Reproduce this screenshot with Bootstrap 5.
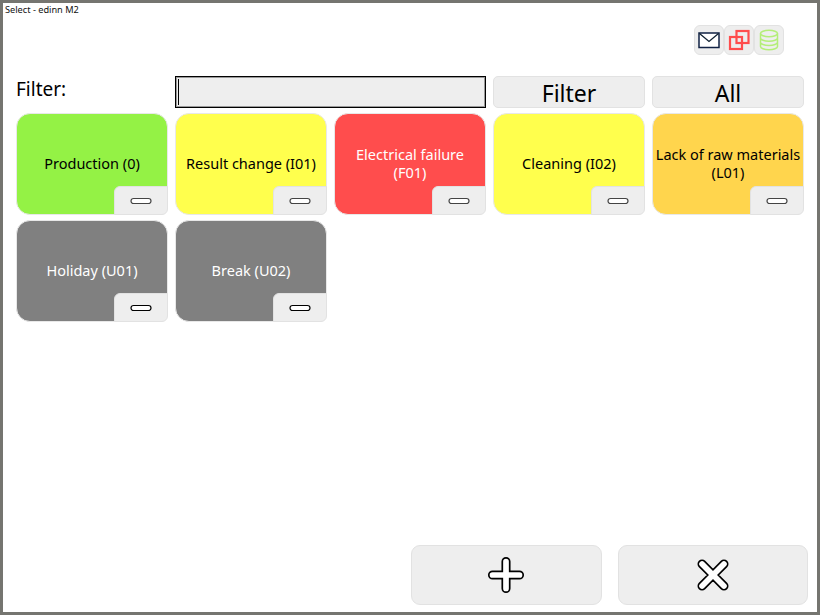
<!DOCTYPE html>
<html lang="en"><head><meta charset="utf-8"><title>Select - edinn M2</title>
<link href="https://cdn.jsdelivr.net/npm/bootstrap@5.3.0/dist/css/bootstrap.min.css" rel="stylesheet">
<style>
html,body{margin:0;height:615px;overflow:hidden;background:#fff}
body{font-family:"Noto Sans","DejaVu Sans",sans-serif;color:#000}
.win{width:820px;height:615px;border:3px solid #757570;background:#fff;padding:0 6px 7px 13px}
.wintitle{font-size:9.2px;line-height:12px;height:22px;margin-left:-11px;padding-top:1px;color:#111}
.topicons{height:30px;padding-right:27px}
.ibtn,.fbtn,.minbtn,.bigbtn{background:#eee;border:1px solid #e2e2e2;padding:0;display:flex;align-items:center;justify-content:center;color:#000}
.ibtn{width:30px;height:30px;border-radius:6px}
.filterrow{height:32px;margin-top:21px;width:788px;gap:7px}
.flabel{width:152px;font-size:19px;line-height:24px;padding-top:1px}
.finput{width:311px;height:32px;background:#eee linear-gradient(#000,#000) 2px center/1px 26px no-repeat;border:1px solid #000;outline:1px solid #999;outline-offset:-2px;padding:0}
.fbtn{width:152px;height:32px;border-radius:5px;font-size:23px;line-height:1;padding-top:2px}
.tiles{display:grid;grid-template-columns:repeat(5,152px);grid-auto-rows:102px;gap:5px 7px;margin-top:5px;width:788px}
.tile{position:relative;border:1px solid #e8e8e8;border-radius:14px;display:flex;align-items:center;justify-content:center;text-align:center;font-size:14.5px;line-height:18px;padding:0 0 2px}
.tile.c-g{background:#94f245}.tile.c-y{background:#ffff4d}.tile.c-r{background:#ff4d4d;color:#fff}.tile.c-o{background:#ffd54d}.tile.c-k{background:#808080;color:#fff}
.minbtn{position:absolute;right:-1px;bottom:-1px;width:54px;height:29px;border-radius:6px 0 6px 0}
.barmark{fill:#fff;stroke:#000;stroke-width:1.2}
.rowa .barmark{stroke:#444}
.spacer{flex:1 1 auto}
.bottom{gap:16px;padding-left:395px;width:792px}
.bigbtn{width:191px;height:60px;border-radius:9px}
.glyph{fill:#fff;stroke:#000;stroke-width:1.7}
</style></head><body>
<div class="win d-flex flex-column">
 <div class="wintitle">Select - edinn M2</div>
 <div class="topicons d-flex justify-content-end">
  <button class="ibtn"><svg width="24" height="18" viewBox="0 0 24 18"><rect x="2" y="2" width="20" height="14.500" fill="#fff" stroke="#124" stroke-width="1.500"/><path d="M2.500 2.500l9.500 8 9.500-8" fill="none" stroke="#123" stroke-width="1.300"/></svg></button>
  <button class="ibtn"><svg width="22" height="22" viewBox="0 0 22 22" fill="none" stroke="#ff4d4d" stroke-width="2.200"><rect x="8.500" y="2" width="12" height="12"/><rect x="2" y="8" width="12" height="12"/></svg></button>
  <button class="ibtn"><svg width="20" height="22" viewBox="0 0 20 22" fill="none" stroke="#b4ee78" stroke-width="1.500"><ellipse cx="10" cy="4.500" rx="8.500" ry="3.200"/><path d="M1.500 4.500v13c0 1.800 3.800 3.200 8.500 3.200s8.500-1.400 8.500-3.200v-13M1.500 9c0 1.800 3.800 3.200 8.500 3.200s8.500-1.400 8.500-3.200M1.500 13.300c0 1.800 3.800 3.200 8.500 3.200s8.500-1.400 8.500-3.200"/></svg></button>
 </div>
 <div class="filterrow d-flex">
  <div class="flabel">Filter:</div>
  <input class="finput" aria-label="Filter">
  <button class="fbtn">Filter</button>
  <button class="fbtn">All</button>
 </div>
 <div class="tiles">
  <div class="tile c-g rowa">Production (0)<button class="minbtn"><svg width="22" height="8"><rect class="barmark" x="1" y="1.500" width="20" height="5" rx="2.500"/></svg></button></div>
  <div class="tile c-y rowa">Result change (I01)<button class="minbtn"><svg width="22" height="8"><rect class="barmark" x="1" y="1.500" width="20" height="5" rx="2.500"/></svg></button></div>
  <div class="tile c-r rowa"><span>Electrical failure<br>(F01)</span><button class="minbtn"><svg width="22" height="8"><rect class="barmark" x="1" y="1.500" width="20" height="5" rx="2.500"/></svg></button></div>
  <div class="tile c-y rowa">Cleaning (I02)<button class="minbtn"><svg width="22" height="8"><rect class="barmark" x="1" y="1.500" width="20" height="5" rx="2.500"/></svg></button></div>
  <div class="tile c-o rowa"><span>Lack of raw materials<br>(L01)</span><button class="minbtn"><svg width="22" height="8"><rect class="barmark" x="1" y="1.500" width="20" height="5" rx="2.500"/></svg></button></div>
  <div class="tile c-k">Holiday (U01)<button class="minbtn"><svg width="22" height="8"><rect class="barmark" x="1" y="1.500" width="20" height="5" rx="2.500"/></svg></button></div>
  <div class="tile c-k">Break (U02)<button class="minbtn"><svg width="22" height="8"><rect class="barmark" x="1" y="1.500" width="20" height="5" rx="2.500"/></svg></button></div>
 </div>
 <div class="spacer"></div>
 <div class="bottom d-flex">
  <button class="bigbtn"><svg width="38" height="38" viewBox="0 0 38 38"><path class="glyph" d="M15.300 5.500a3.700 3.700 0 0 1 7.400 0V15.300H32.500a3.700 3.700 0 0 1 0 7.400H22.700V32.500a3.700 3.700 0 0 1-7.400 0V22.700H5.500a3.700 3.700 0 0 1 0-7.400H15.300Z"/></svg></button>
  <button class="bigbtn"><svg width="38" height="38" viewBox="0 0 38 38"><path class="glyph" transform="rotate(45 19 19)" d="M15.300 3.500a3.700 3.700 0 0 1 7.400 0V15.300H34.500a3.700 3.700 0 0 1 0 7.400H22.700V34.500a3.700 3.700 0 0 1-7.400 0V22.700H3.500a3.700 3.700 0 0 1 0-7.400H15.300Z"/></svg></button>
 </div>
</div>
</body></html>
